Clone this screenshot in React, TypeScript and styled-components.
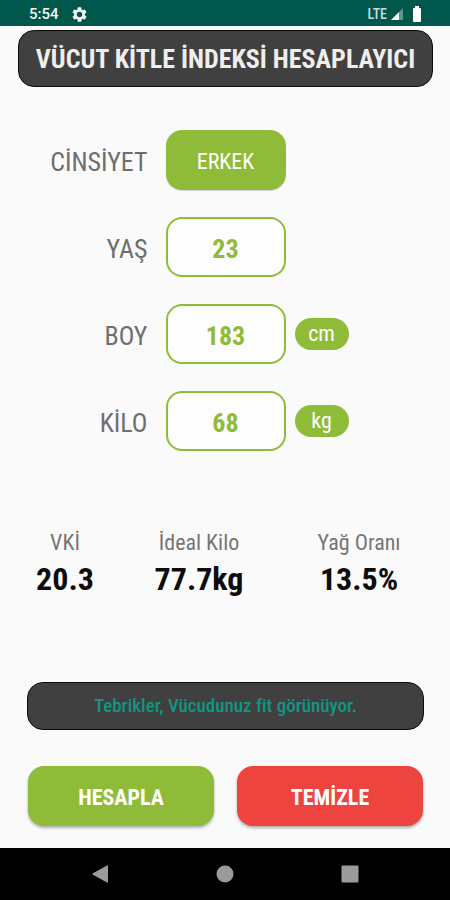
import React, { useState } from "react";
import styled, { createGlobalStyle } from "styled-components";

const GlobalStyle = createGlobalStyle`
  *, *::before, *::after { box-sizing: border-box; }
  body { margin: 0; background: #fafafa; }
  body, button, input {
    font-family: "Roboto Condensed", "Liberation Sans Narrow", Roboto, sans-serif;
  }
`;

const green = "#8fbc38";

const Screen = styled.div`
  display: flex;
  flex-direction: column;
  min-height: 100vh;
  background: #fafafa;
`;

const StatusBar = styled.header`
  display: flex;
  align-items: center;
  justify-content: space-between;
  height: 26px;
  padding: 2px 28px 0 29px;
  background: #00574b;
  color: #f2f6f5;
  font-family: Roboto, sans-serif;
`;

const StatusGroup = styled.div<{ $gap: number }>`
  display: flex;
  align-items: center;
  gap: ${(p) => p.$gap}px;
`;

const Clock = styled.span`
  font-size: 15px;
  font-weight: 500;
`;

const Network = styled.span`
  margin-right: 3px;
  font-family: "Roboto Condensed", "Liberation Sans Narrow", Roboto, sans-serif;
  font-size: 14px;
  font-weight: 500;
  color: #c9dbd8;
`;

const Battery = styled.svg`
  margin-left: 8px;
`;

const Title = styled.h1`
  margin: 4px 17px 0 18px;
  padding: 12px 0 11px;
  border: 1px solid #0c0c0c;
  border-radius: 16px;
  background: #404040;
  color: #eeeeee;
  font-size: 26px;
  font-weight: 700;
  line-height: 32px;
  text-align: center;
  white-space: nowrap;
`;

const Form = styled.form`
  display: flex;
  flex: 1;
  flex-direction: column;
  justify-content: space-between;
  padding: 43px 0 22px;
`;

const Fields = styled.div`
  display: grid;
  gap: 27px;
`;

const FieldRow = styled.div`
  display: grid;
  grid-template-columns: 1fr 120px 1fr;
  align-items: center;
  padding-left: 1px;
`;

const FieldLabel = styled.label`
  padding: 4px 18px 0 0;
  color: #6e6e6e;
  font-size: 26px;
  font-weight: 400;
  line-height: 32px;
  text-align: right;
`;

const Toggle = styled.button`
  height: 60px;
  padding: 2px 0 0;
  border: 0;
  border-radius: 16px;
  background: ${green};
  box-shadow: 0 1px 1px rgba(0, 0, 0, 0.15);
  color: #ffffff;
  font-size: 22px;
  cursor: pointer;
`;

const NumberBox = styled.input`
  width: 100%;
  height: 60px;
  padding: 4px 0 0;
  border: 2px solid ${green};
  border-radius: 16px;
  background: #fdfdfd;
  color: ${green};
  font-size: 26px;
  font-weight: 700;
  text-align: center;
`;

const Unit = styled.span`
  justify-self: start;
  width: 54px;
  margin-left: 9px;
  border-radius: 16px;
  background: ${green};
  color: #ffffff;
  font-size: 22px;
  line-height: 32px;
  text-align: center;
`;

const Results = styled.dl`
  display: grid;
  grid-template-columns: 130fr 138fr 182fr;
  margin: 0;
  padding-bottom: 8px;
  text-align: center;
`;

const ResultName = styled.dt`
  color: #757575;
  font-size: 22px;
  font-weight: 400;
  line-height: 32px;
`;

const ResultValue = styled.dd`
  margin: 0;
  color: #0d0d0d;
  font-size: 32px;
  font-weight: 700;
  line-height: 40px;
`;

const Footer = styled.div`
  display: grid;
  gap: 36px;
`;

const Message = styled.p`
  margin: 0 26px 0 27px;
  padding: 7px 0;
  border: 1px solid #0c0c0c;
  border-radius: 16px;
  background: #404040;
  color: #129583;
  font-size: 19px;
  font-weight: 500;
  line-height: 32px;
  text-align: center;
`;

const Actions = styled.div`
  display: grid;
  grid-template-columns: 1fr 1fr;
  gap: 23px;
  margin: 0 27px 0 28px;
`;

const ActionButton = styled.button<{ $color: string }>`
  height: 60px;
  padding: 2px 0 0;
  border: 0;
  border-radius: 16px;
  background: ${(p) => p.$color};
  box-shadow: 0 2px 3px rgba(0, 0, 0, 0.3);
  color: #ffffff;
  font-size: 22px;
  font-weight: 700;
  cursor: pointer;
`;

const NavBar = styled.nav`
  display: grid;
  grid-template-columns: 1fr 34px 1fr;
  align-items: center;
  height: 52px;
  padding: 0 83px;
  background: #000000;
`;

const NavButton = styled.button<{ $align?: string }>`
  display: flex;
  justify-self: ${(p) => p.$align ?? "center"};
  padding: 8px;
  border: 0;
  background: none;
  cursor: pointer;
`;

const results = [
  { name: "VKİ", value: "20.3" },
  { name: "İdeal Kilo", value: "77.7kg" },
  { name: "Yağ Oranı", value: "13.5%" },
];

const fields = [
  { id: "age", label: "YAŞ", initial: "23", unit: "" },
  { id: "height", label: "BOY", initial: "183", unit: "cm" },
  { id: "weight", label: "KİLO", initial: "68", unit: "kg" },
];

export default function App() {
  const [male, setMale] = useState(true);

  return (
    <Screen lang="tr">
      <GlobalStyle />
      <StatusBar>
        <StatusGroup $gap={13}>
          <Clock>5:54</Clock>
          <svg width="15" height="15" viewBox="2 2 20 20" fill="currentColor" aria-hidden="true">
            <path d="M19.14 12.94c.04-.3.06-.61.06-.94s-.02-.64-.07-.94l2.03-1.58a.49.49 0 0 0 .12-.61l-1.92-3.32a.49.49 0 0 0-.59-.22l-2.39.96a7 7 0 0 0-1.62-.94l-.36-2.54a.48.48 0 0 0-.48-.41h-3.84a.48.48 0 0 0-.47.41l-.36 2.54c-.59.24-1.13.57-1.62.94l-2.39-.96a.48.48 0 0 0-.59.22L2.74 8.87a.48.48 0 0 0 .12.61l2.03 1.58c-.05.3-.09.63-.09.94s.02.64.07.94l-2.03 1.58a.49.49 0 0 0-.12.61l1.92 3.32c.12.22.37.29.59.22l2.39-.96c.5.38 1.03.7 1.62.94l.36 2.54c.05.24.24.41.48.41h3.84c.24 0 .44-.17.47-.41l.36-2.54a7 7 0 0 0 1.62-.94l2.39.96c.22.08.47 0 .59-.22l1.92-3.32a.48.48 0 0 0-.12-.61zM12 15.6a3.6 3.6 0 1 1 0-7.2 3.6 3.6 0 0 1 0 7.2z" />
          </svg>
        </StatusGroup>
        <StatusGroup $gap={0}>
          <Network>LTE</Network>
          <svg width="14" height="14" viewBox="0 0 14 14" aria-hidden="true">
            <path d="M13 1v12H9V5z" fill="#5e958d" />
            <path d="M9 5v8H1z" fill="#ffffff" />
          </svg>
          <Battery width="10" height="16" viewBox="0 0 10 16" aria-hidden="true">
            <path d="M3 0h4v2h1q1 0 1 1v12q0 1-1 1H2q-1 0-1-1V3q0-1 1-1h1z" fill="#ffffff" />
          </Battery>
        </StatusGroup>
      </StatusBar>

      <Title>VÜCUT KİTLE İNDEKSİ HESAPLAYICI</Title>

      <Form onSubmit={(e) => e.preventDefault()}>
        <Fields>
          <FieldRow>
            <FieldLabel htmlFor="gender">CİNSİYET</FieldLabel>
            <Toggle id="gender" type="button" onClick={() => setMale(!male)}>
              {male ? "ERKEK" : "KADIN"}
            </Toggle>
          </FieldRow>
          {fields.map((f) => (
            <FieldRow key={f.id}>
              <FieldLabel htmlFor={f.id}>{f.label}</FieldLabel>
              <NumberBox id={f.id} inputMode="numeric" defaultValue={f.initial} />
              {f.unit && <Unit>{f.unit}</Unit>}
            </FieldRow>
          ))}
        </Fields>

        <Results>
          {results.map((r) => (
            <div key={r.name}>
              <ResultName>{r.name}</ResultName>
              <ResultValue>{r.value}</ResultValue>
            </div>
          ))}
        </Results>

        <Footer>
          <Message>Tebrikler, Vücudunuz fit görünüyor.</Message>
          <Actions>
            <ActionButton type="submit" $color={green}>HESAPLA</ActionButton>
            <ActionButton type="reset" $color="#ee4440">TEMİZLE</ActionButton>
          </Actions>
        </Footer>
      </Form>

      <NavBar>
        <NavButton type="button" aria-label="Geri" $align="start">
          <svg width="18" height="18" viewBox="0 0 18 18" fill="#9b9b9b">
            <path d="M17 1v16q0 1-1 .5L2 9.8q-1-.8 0-1.6L16 .5q1-.5 1 .5z" />
          </svg>
        </NavButton>
        <NavButton type="button" aria-label="Ana ekran">
          <svg width="18" height="18" viewBox="0 0 18 18" fill="#9b9b9b">
            <circle cx="9" cy="9" r="8.5" />
          </svg>
        </NavButton>
        <NavButton type="button" aria-label="Son uygulamalar" $align="end">
          <svg width="18" height="18" viewBox="0 0 18 18" fill="#9b9b9b">
            <rect x="0.5" y="0.5" width="17" height="17" rx="1" />
          </svg>
        </NavButton>
      </NavBar>
    </Screen>
  );
}
